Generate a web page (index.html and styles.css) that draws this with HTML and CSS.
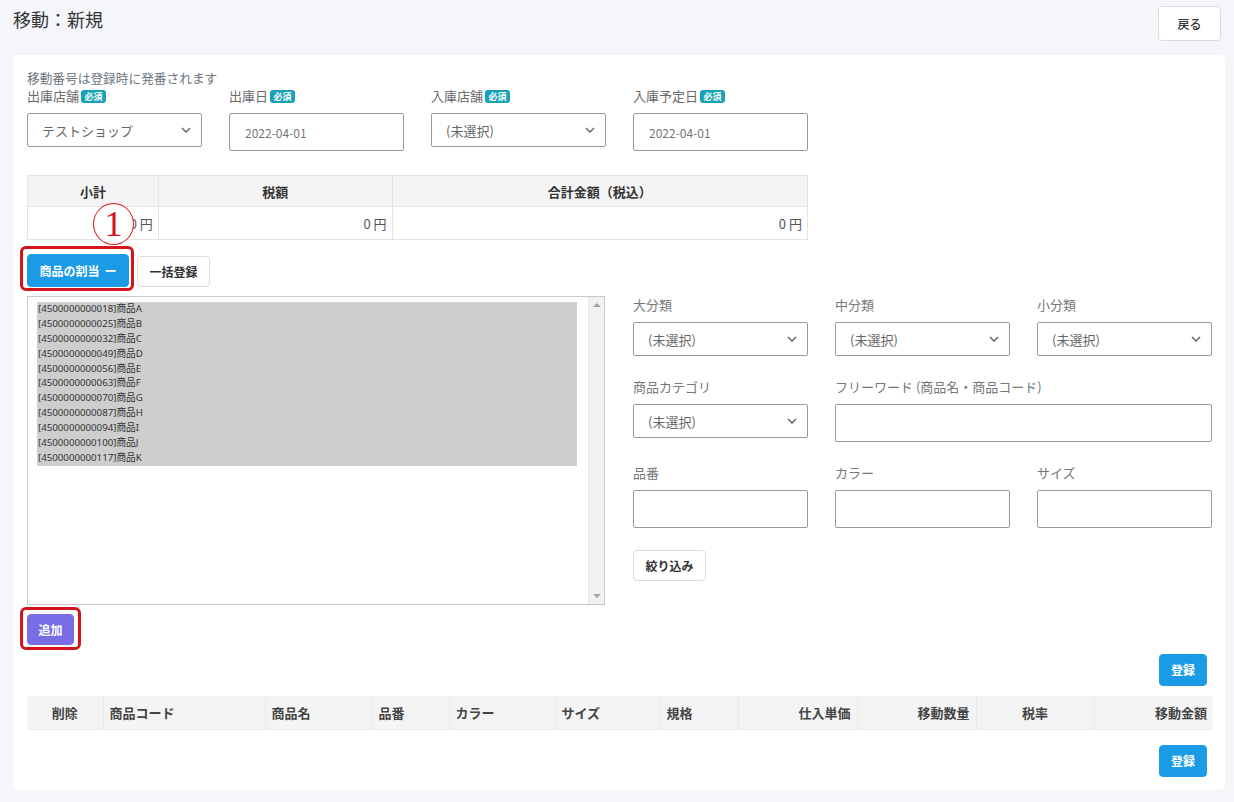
FILE: index.html
```html
<!DOCTYPE html>
<html lang="ja">
<head>
<meta charset="utf-8">
<title>移動：新規</title>
<link rel="stylesheet" href="styles.css">
</head>
<body>
<div class="topbar">
  <h1 class="title">移動：新規</h1>
  <button class="btn btn-white btn-back">戻る</button>
</div>
<div class="card">
  <p class="note">移動番号は登録時に発番されます</p>
  <div class="fields">
    <div class="field">
      <div class="label">出庫店舗<span class="badge">必須</span></div>
      <div class="select"><span>テストショップ</span><svg class="chev" width="10" height="6" viewBox="0 0 10 6"><path d="M1 1l4 4 4-4" /></svg></div>
    </div>
    <div class="field">
      <div class="label">出庫日<span class="badge">必須</span></div>
      <div class="input date">2022-04-01</div>
    </div>
    <div class="field">
      <div class="label">入庫店舗<span class="badge">必須</span></div>
      <div class="select"><span>(未選択)</span><svg class="chev" width="10" height="6" viewBox="0 0 10 6"><path d="M1 1l4 4 4-4" /></svg></div>
    </div>
    <div class="field">
      <div class="label">入庫予定日<span class="badge">必須</span></div>
      <div class="input date">2022-04-01</div>
    </div>
  </div>

  <table class="totals">
    <thead>
      <tr><th class="c1">小計</th><th class="c2">税額</th><th class="c3">合計金額（税込）</th></tr>
    </thead>
    <tbody>
      <tr><td>0 円</td><td>0 円</td><td>0 円</td></tr>
    </tbody>
  </table>

  <div class="actions">
    <span class="annot annot-assign">
      <button class="btn btn-blue btn-assign">商品の割当<span class="dash">ー</span></button>
      <span class="annot-circle">1</span>
    </span>
    <button class="btn btn-white btn-bulk">一括登録</button>
  </div>

  <div class="picker">
    <div class="listbox">
      <div class="options">
        <div>[4500000000018]商品A</div>
        <div>[4500000000025]商品B</div>
        <div>[4500000000032]商品C</div>
        <div>[4500000000049]商品D</div>
        <div>[4500000000056]商品E</div>
        <div>[4500000000063]商品F</div>
        <div>[4500000000070]商品G</div>
        <div>[4500000000087]商品H</div>
        <div>[4500000000094]商品I</div>
        <div>[4500000000100]商品J</div>
        <div>[4500000000117]商品K</div>
      </div>
      <div class="scrollbar"><span class="arrow up"></span><span class="arrow down"></span></div>
    </div>
    <div class="filters">
      <div class="field">
        <div class="label flabel">大分類</div>
        <div class="select"><span>(未選択)</span><svg class="chev" width="10" height="6" viewBox="0 0 10 6"><path d="M1 1l4 4 4-4" /></svg></div>
      </div>
      <div class="field">
        <div class="label flabel">中分類</div>
        <div class="select"><span>(未選択)</span><svg class="chev" width="10" height="6" viewBox="0 0 10 6"><path d="M1 1l4 4 4-4" /></svg></div>
      </div>
      <div class="field">
        <div class="label flabel">小分類</div>
        <div class="select"><span>(未選択)</span><svg class="chev" width="10" height="6" viewBox="0 0 10 6"><path d="M1 1l4 4 4-4" /></svg></div>
      </div>
      <div class="field">
        <div class="label flabel">商品カテゴリ</div>
        <div class="select"><span>(未選択)</span><svg class="chev" width="10" height="6" viewBox="0 0 10 6"><path d="M1 1l4 4 4-4" /></svg></div>
      </div>
      <div class="field span2">
        <div class="label flabel">フリーワード (商品名・商品コード)</div>
        <div class="input"></div>
      </div>
      <div class="field">
        <div class="label flabel">品番</div>
        <div class="input"></div>
      </div>
      <div class="field">
        <div class="label flabel">カラー</div>
        <div class="input"></div>
      </div>
      <div class="field">
        <div class="label flabel">サイズ</div>
        <div class="input"></div>
      </div>
      <div class="field">
        <button class="btn btn-white btn-filter">絞り込み</button>
      </div>
    </div>
  </div>

  <div class="add-row">
    <span class="annot annot-add">
      <button class="btn btn-purple btn-add">追加</button>
    </span>
  </div>

  <div class="register-row">
    <button class="btn btn-blue btn-register">登録</button>
  </div>

  <table class="items">
    <thead>
      <tr>
        <th class="w-del center">削除</th>
        <th class="w-code">商品コード</th>
        <th class="w-name">商品名</th>
        <th class="w-no">品番</th>
        <th class="w-color">カラー</th>
        <th class="w-size">サイズ</th>
        <th class="w-spec">規格</th>
        <th class="w-price right">仕入単価</th>
        <th class="w-qty right">移動数量</th>
        <th class="w-tax center">税率</th>
        <th class="w-amt right">移動金額</th>
      </tr>
    </thead>
  </table>

  <div class="register-row register-bottom">
    <button class="btn btn-blue btn-register">登録</button>
  </div>
</div>
</body>
</html>
```

FILE: styles.css
```css
* { box-sizing: border-box; }

html, body {
  margin: 0;
  padding: 0;
}

body {
  background: #f4f6f9;
  font-family: "Noto Sans CJK JP", "Noto Sans", sans-serif;
  color: #333;
  width: 1234px;
  min-height: 802px;
}

.topbar {
  display: flex;
  justify-content: space-between;
  align-items: flex-start;
  height: 55px;
  padding: 6px 13px 0 13px;
}

.title {
  margin: 0;
  font-size: 18px;
  font-weight: 400;
  line-height: 26px;
  color: #333;
}

.btn {
  font-family: "Noto Sans CJK JP", "Noto Sans", sans-serif;
  font-size: 12px;
  font-weight: 700;
  border-radius: 4px;
  border: 1px solid transparent;
  padding: 0;
  display: inline-flex;
  align-items: center;
  justify-content: center;
  cursor: pointer;
  line-height: 1;
}

.btn-white {
  background: #fff;
  border-color: #dcdcdc;
  color: #333;
}

.btn-blue {
  background: #1b9be6;
  border-color: #1b9be6;
  color: #fff;
}

.btn-purple {
  background: #776de6;
  border-color: #776de6;
  color: #fff;
}

.btn-back {
  width: 63px;
  height: 35px;
  font-weight: 500;
}

.card {
  background: #fff;
  margin: 0 9px 0 13px;
  border-radius: 4px;
  padding: 14px 14px 13px 14px;
  box-shadow: 0 0 1px rgba(0,0,0,0.08);
}

.note {
  margin: 0;
  font-size: 12.7px;
  line-height: 18px;
  height: 18px;
  color: #6c757d;
}

.fields {
  display: flex;
  gap: 27px;
  align-items: flex-start;
}

.field {
  width: 175px;
}

.label {
  font-size: 13px;
  line-height: 18px;
  height: 18px;
  color: #6a6a6a;
  margin-bottom: 8px;
  display: flex;
  align-items: center;
  white-space: nowrap;
}

.flabel {
  color: #777;
}

.badge {
  display: inline-block;
  background: #17a2b8;
  color: #fff;
  font-size: 9px;
  font-weight: 700;
  line-height: 13px;
  padding: 0 3.5px;
  border-radius: 3px;
  margin-left: 2px;
}

.select {
  height: 34px;
  border: 1px solid #9a9a9a;
  border-radius: 2px;
  display: flex;
  align-items: center;
  justify-content: space-between;
  padding: 0 10px 0 14px;
  font-size: 13px;
  color: #666;
  background: #fff;
}

.chev path {
  fill: none;
  stroke: #666;
  stroke-width: 1.5;
}

.input {
  height: 38px;
  border: 1px solid #9a9a9a;
  border-radius: 2px;
  background: #fff;
}

.date {
  display: flex;
  align-items: center;
  padding-left: 15px;
  font-size: 12px;
  color: #777;
}

.totals {
  margin-top: 24px;
  border-collapse: collapse;
  width: 781px;
  font-size: 13px;
}

.totals th, .totals td {
  border: 1px solid #e4e4e4;
  padding: 0 5px;
}

.totals th {
  background: #f4f4f4;
  height: 31px;
  font-weight: 700;
  color: #333;
  text-align: center;
}

.totals td {
  height: 33px;
  text-align: right;
  color: #555;
}

.totals .c1 { width: 131px; }
.totals .c2 { width: 234px; }
.totals .c3 { width: 416px; }

.actions {
  margin-top: 14px;
  display: flex;
  align-items: flex-end;
  gap: 8px;
}

.annot {
  position: relative;
  display: inline-flex;
}

.annot::after {
  content: "";
  position: absolute;
  border: 3px solid #d4141c;
  border-radius: 6px;
  pointer-events: none;
}

.annot-assign::after {
  left: -7px;
  right: -5px;
  top: -8px;
  bottom: -4px;
}

.annot-add::after {
  left: -7px;
  right: -7px;
  top: -7px;
  bottom: -5px;
}

.annot-circle {
  position: absolute;
  left: 66px;
  top: -51px;
  width: 41px;
  height: 42px;
  border-radius: 50%;
  border: 1.5px solid #d4141c;
  background: #fff;
  color: #d4141c;
  font-family: "Liberation Serif", serif;
  font-size: 36px;
  line-height: 40px;
  text-align: center;
}

.dash {
  margin-left: 5px;
}

.btn-assign {
  width: 102px;
  height: 33px;
}

.btn-bulk {
  width: 73px;
  height: 31px;
}

.picker {
  margin-top: 9px;
  display: flex;
  gap: 28px;
  align-items: flex-start;
}

.listbox {
  flex: 0 0 578px;
  height: 309px;
  border: 1px solid #c9c9c9;
  display: flex;
  background: #fff;
}

.options {
  flex: 1;
  padding: 5px 11px 0 9px;
}

.options div {
  background: #cecece;
  font-family: "Noto Sans", "Noto Sans CJK JP", sans-serif;
  font-size: 9.7px;
  line-height: 14.9px;
  height: 14.9px;
  color: #333;
  padding-left: 1px;
  white-space: nowrap;
}

.scrollbar {
  width: 16px;
  background: #f1f1f1;
  border-left: 1px solid #e6e6e6;
  position: relative;
}

.arrow {
  position: absolute;
  left: 4px;
  width: 0;
  height: 0;
  border-left: 4px solid transparent;
  border-right: 4px solid transparent;
}

.arrow.up {
  top: 6px;
  border-bottom: 4px solid #a3a3a3;
}

.arrow.down {
  bottom: 6px;
  border-top: 4px solid #a3a3a3;
}

.filters {
  display: grid;
  grid-template-columns: 175px 175px 175px;
  column-gap: 27px;
  row-gap: 22px;
  align-items: start;
}

.filters .field {
  width: auto;
}

.span2 {
  grid-column: span 2;
}

.btn-filter {
  width: 73px;
  height: 31px;
}

.add-row {
  margin-top: 9px;
  display: flex;
}

.btn-add {
  width: 47px;
  height: 31px;
}

.register-row {
  margin-top: 9px;
  display: flex;
  justify-content: flex-end;
  padding-right: 4px;
}

.register-bottom {
  margin-top: 15px;
}

.btn-register {
  width: 48px;
  height: 32px;
}

.items {
  margin-top: 10px;
  border-collapse: collapse;
  width: 1186px;
  table-layout: fixed;
}

.items th {
  background: #f4f4f4;
  height: 33px;
  font-size: 13px;
  font-weight: 700;
  color: #444;
  text-align: left;
  padding: 0 6px;
  border-left: 1px solid #ebebeb;
  border-bottom: 1px solid #ebebeb;
  white-space: nowrap;
}

.items th:first-child {
  border-left: none;
}

.items .center { text-align: center; }
.items .right { text-align: right; }

.w-del { width: 76px; }
.w-code { width: 162px; }
.w-name { width: 107px; }
.w-no { width: 77px; }
.w-color { width: 106px; }
.w-size { width: 105px; }
.w-spec { width: 78px; }
.w-price { width: 119px; }
.w-qty { width: 119px; }
.w-tax { width: 118px; }
.w-amt { width: 119px; }
```
